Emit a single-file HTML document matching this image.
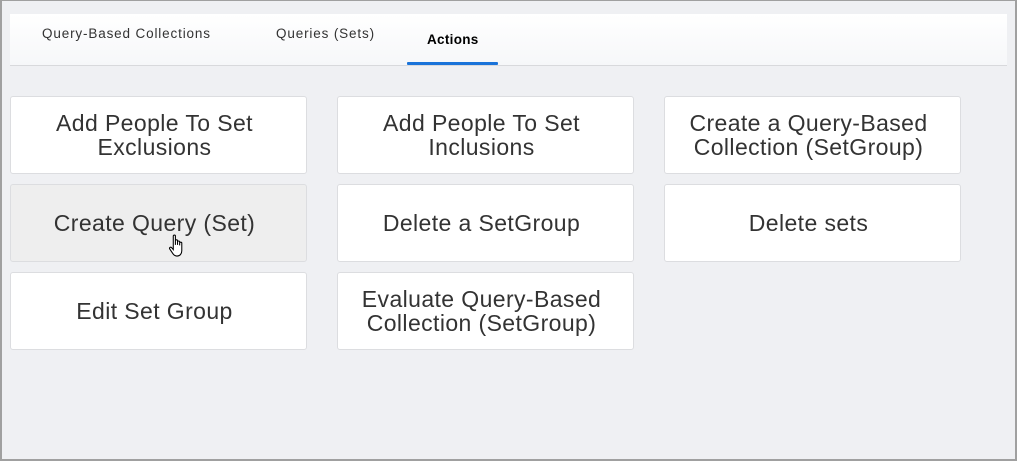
<!DOCTYPE html>
<html><head><style>
body{margin:0;width:1017px;height:462px;overflow:hidden;font-family:"Liberation Sans",Arial,sans-serif;}
.frame{position:absolute;left:0;top:0;width:1013px;height:458px;border:2px solid #a0a0a0;border-top-width:1px;background:#eff0f3;}
.tabs{position:absolute;left:8px;top:13px;width:997px;height:51px;background:linear-gradient(#fff,#f6f7f9);border-bottom:1px solid #d8d9dc;}
.tab{position:absolute;font-size:13.5px;letter-spacing:0.85px;color:#333;top:12px;}
.tab.act{font-weight:bold;color:#000;top:18px;letter-spacing:0.3px;}
.ul{position:absolute;left:397px;top:48px;width:91px;height:3px;background:#1a73d9;border-radius:1px;}
.card{position:absolute;width:297px;height:78px;background:#fff;border:1px solid #dcdde0;border-radius:3px;display:flex;align-items:center;justify-content:center;text-align:center;font-size:23px;letter-spacing:0.4px;line-height:24px;color:#333;box-sizing:border-box;padding-right:8px;}
.hov{background:#eeeeee;}
</style></head><body>
<div class="frame">
<div class="tabs">
<div class="tab" style="left:32px">Query-Based Collections</div>
<div class="tab" style="left:266px">Queries (Sets)</div>
<div class="tab act" style="left:417px">Actions</div>
<div class="ul"></div>
</div>
<div class="card" style="left:8px;top:95px">Add People To Set<br>Exclusions</div>
<div class="card" style="left:335px;top:95px">Add People To Set<br>Inclusions</div>
<div class="card" style="left:662px;top:95px">Create a Query-Based<br>Collection (SetGroup)</div>
<div class="card hov" style="left:8px;top:183px">Create Query (Set)</div>
<div class="card" style="left:335px;top:183px">Delete a SetGroup</div>
<div class="card" style="left:662px;top:183px">Delete sets</div>
<div class="card" style="left:8px;top:271px">Edit Set Group</div>
<div class="card" style="left:335px;top:271px">Evaluate Query-Based<br>Collection (SetGroup)</div>
<svg style="position:absolute;left:165px;top:232px" width="22" height="26" viewBox="0 0 18 22"><path d="M5 2.5c0-1 1.8-1 1.8 0V10V6.5c0-1 1.8-1 1.8 0V10V7.5c0-1 1.8-1 1.8 0V10.5V8.5c0-1 1.8-1 1.8 0V15c0 2.5-1.5 4.5-4 4.5H8c-1.5 0-2.5-.8-3.3-2L2 13.5c-.6-1 .6-2 1.5-1.2L5 14Z" fill="#fff" stroke="#000" stroke-width="0.9"/></svg>
</div>
</body></html>
